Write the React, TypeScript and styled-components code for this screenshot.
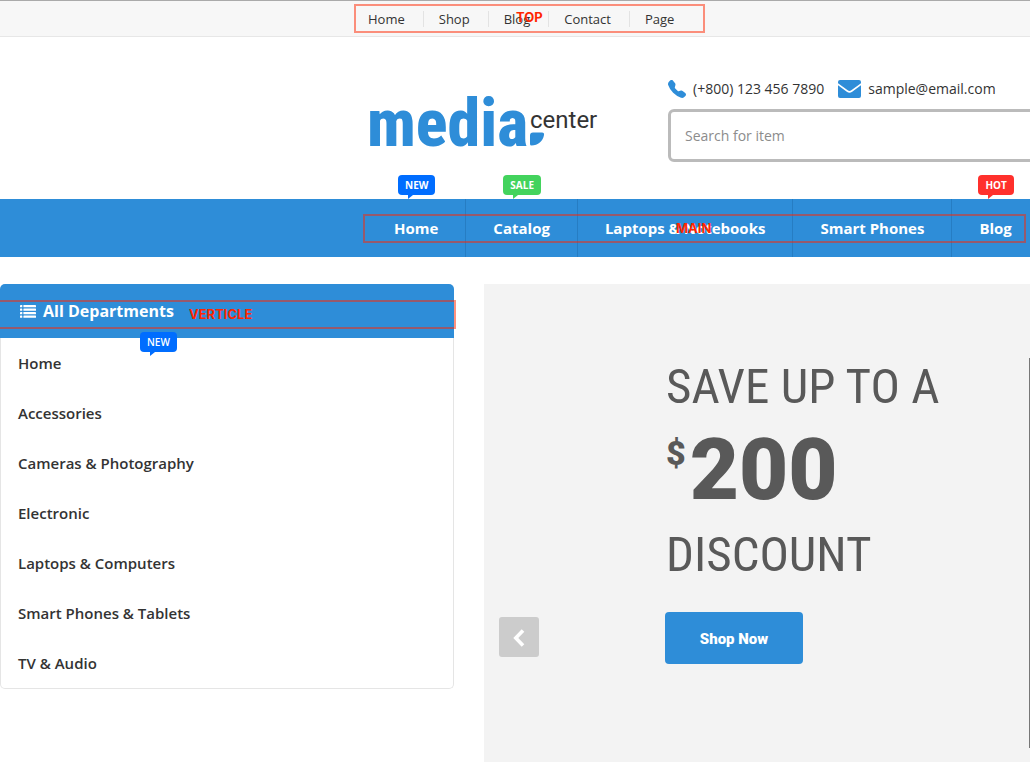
import React from 'react';
import styled, { createGlobalStyle, css } from 'styled-components';
import { BsTelephoneFill } from 'react-icons/bs';

const blue = '#2e8dd8';
const narrow = "'Liberation Sans Narrow', 'Roboto Condensed', Roboto, sans-serif";

const GlobalStyle = createGlobalStyle`
  *, *::before, *::after { box-sizing: border-box; }
  body {
    margin: 0;
    background: #fff;
    color: #333;
    font-family: 'Open Sans', 'Noto Sans', sans-serif;
    overflow-x: hidden;
  }
  a { color: inherit; text-decoration: none; }
  ul { list-style: none; margin: 0; padding: 0; }
`;

const Page = styled.div`
  display: flex;
  flex-direction: column;
  min-height: 100vh;
  overflow: hidden;
`;

const TopBar = styled.nav`
  position: relative;
  height: 37px;
  padding-left: 353px;
  background: #f7f7f7;
  border-top: 1px solid #aaa;
  border-bottom: 1px solid #e7e7e7;
`;

const TopList = styled.ul`
  display: flex;
  align-items: center;
  height: 100%;
`;

const TopItem = styled.li`
  padding: 0 18px 0 15px;
  font-size: 13px;
  line-height: 16px;
  & + & { border-left: 1px solid #e3e3e3; }
`;

const Outline = styled.div<{ $left: number; $top: number; $width: number }>`
  position: absolute;
  left: ${p => p.$left}px;
  top: ${p => p.$top}px;
  width: ${p => p.$width}px;
  height: 29px;
  border: 2px solid rgba(255, 38, 0, 0.5);
  pointer-events: none;
`;

const Note = styled.span<{ $left: number; $top: number }>`
  position: absolute;
  left: ${p => p.$left}px;
  top: ${p => p.$top}px;
  color: #ff2600;
  font: 700 13px/16px Inter, sans-serif;
  pointer-events: none;
`;

const Header = styled.header`
  display: flex;
  align-items: flex-start;
  height: 162px;
  padding-left: 367px;
`;

const Logo = styled.a`
  position: relative;
  flex: none;
  display: flex;
  align-items: flex-start;
  width: 301px;
  padding-top: 53px;
  color: ${blue};
`;

const LogoMain = styled.span`
  font: 800 66px/68px ${narrow};
`;

const LogoSub = styled.span`
  position: absolute;
  left: 163px;
  top: 69px;
  color: #333;
  font: 400 24px/28px Roboto, sans-serif;
`;

const LogoDrop = styled.svg`
  position: absolute;
  left: 163px;
  top: 95px;
`;

const HeaderTools = styled.div`
  flex: 1;
  padding-top: 39px;
`;

const Contacts = styled.div`
  display: flex;
  align-items: center;
  gap: 14px;
  height: 25px;
  font-size: 14px;
`;

const Contact = styled.a`
  display: flex;
  align-items: center;
  gap: 7px;
  svg { flex: none; color: ${blue}; }
`;

const Search = styled.input`
  display: block;
  width: calc(100% + 40px);
  height: 53px;
  margin-top: 8px;
  padding: 0 14px;
  border: 3px solid #bbb;
  border-radius: 6px;
  outline: 0;
  background: #fff;
  font: 400 14px/20px 'Open Sans', sans-serif;
  &::placeholder { color: #8c8c8c; opacity: 1; }
`;

const MainNav = styled.nav`
  position: relative;
  height: 58px;
  padding-left: 367px;
  background: ${blue};
`;

const MainList = styled.ul`
  display: flex;
  height: 100%;
`;

const MainItem = styled.li`
  position: relative;
  flex: none;
  & + & { border-left: 1px solid #267dc3; }
  > a {
    display: block;
    padding: 0 27px;
    color: #fff;
    font-size: 15px;
    font-weight: 700;
    line-height: 58px;
  }
`;

const Badge = styled.span<{ $color: string; $left: number; $top: number; $light?: boolean }>`
  position: absolute;
  left: ${p => p.$left}px;
  top: ${p => p.$top}px;
  padding: 0 7px;
  border-radius: 4px;
  background: ${p => p.$color};
  color: #fff;
  font-size: 10px;
  font-weight: 700;
  line-height: 20px;
  &::after {
    content: '';
    position: absolute;
    left: 10px;
    top: 20px;
    border-top: 4px solid ${p => p.$color};
    border-right: 5px solid transparent;
  }
  ${p => p.$light && css`font-weight: 600;`}
`;

const Content = styled.main`
  flex: 1;
  display: grid;
  grid-template-columns: 454px 1fr;
  gap: 30px;
  padding-top: 27px;
`;

const Departments = styled.aside`
  position: relative;
  align-self: start;
`;

const DeptTitle = styled.h2`
  display: flex;
  align-items: center;
  gap: 7px;
  height: 54px;
  margin: 0;
  padding-left: 20px;
  border-radius: 5px 5px 0 0;
  background: ${blue};
  color: #fff;
  font-size: 16px;
  font-weight: 700;
`;

const DeptList = styled.ul`
  border: 1px solid #e5e5e5;
  border-top: 0;
  border-radius: 0 0 5px 5px;
`;

const DeptItem = styled.li`
  position: relative;
  padding-left: 17px;
  font-size: 15px;
  font-weight: 600;
  line-height: 50px;
`;

const Banner = styled.section`
  position: relative;
  min-height: 478px;
  padding: 76px 0 90px 182px;
  background: #f3f3f3;
  color: #595959;
`;

const BannerLine = styled.p`
  margin: 0;
  font: 400 49px/54px ${narrow};
  white-space: nowrap;
`;

const Price = styled.p`
  display: flex;
  align-items: flex-start;
  gap: 4px;
  height: 114px;
  margin: 0;
  padding-top: 15px;
  font: 900 85px/82px Roboto, sans-serif;
  sup { font-size: 34px; line-height: 48px; }
`;

const ShopButton = styled.button`
  display: block;
  min-width: 138px;
  height: 52px;
  margin-top: 30px;
  margin-left: -1px;
  padding: 2px 34px 0;
  border: 0;
  border-radius: 4px;
  background: ${blue};
  color: #fff;
  font: 900 15px/20px Roboto, sans-serif;
`;

const Previous = styled.button`
  position: absolute;
  left: 15px;
  top: 333px;
  display: grid;
  place-items: center;
  width: 40px;
  height: 40px;
  padding: 2px 0 0;
  border: 0;
  border-radius: 3px;
  background: #ccc;
`;

const SlideEdge = styled.span`
  position: absolute;
  right: 0;
  top: 74px;
  width: 1px;
  height: 390px;
  background: #777;
`;

const MailIcon = () => (
  <svg width="23" height="18" viewBox="0 0 23 18" fill="currentColor" aria-hidden="true">
    <path d="M2 0h19a2 2 0 0 1 2 2v1.2l-9.7 7.1c-1.2.9-2.4.9-3.6 0L0 3.200V2a2 2 0 0 1 2-2z" />
    <path d="M0 5.200l8.800 6.500c1.800 1.300 3.600 1.300 5.400 0L23 5.200V16a2 2 0 0 1-2 2H2a2 2 0 0 1-2-2z" />
  </svg>
);

const ListIcon = () => (
  <svg width="16" height="13" viewBox="0 0 16 13" fill="currentColor" aria-hidden="true">
    {[0, 3.5, 7, 10.5].map(y => (
      <React.Fragment key={y}>
        <rect x="0" y={y} width="2.300" height="2.300" rx=".4" />
        <rect x="3.400" y={y} width="12.600" height="2.300" rx=".4" />
      </React.Fragment>
    ))}
  </svg>
);

const topLinks = ['Home', 'Shop', 'Blog', 'Contact', 'Page'];

const mainLinks = [
  { label: 'Home', badge: 'NEW', color: '#006dff', left: 31 },
  { label: 'Catalog', badge: 'SALE', color: '#43d35d', left: 37 },
  { label: 'Laptops & Notebooks' },
  { label: 'Smart Phones' },
  { label: 'Blog', badge: 'HOT', color: '#ff302c', left: 26 },
];

const departments = [
  'Home',
  'Accessories',
  'Cameras & Photography',
  'Electronic',
  'Laptops & Computers',
  'Smart Phones & Tablets',
  'TV & Audio',
];

export default function App() {
  return (
    <Page>
      <GlobalStyle />
      <TopBar aria-label="Top">
        <TopList>
          {topLinks.map(label => (
            <TopItem key={label}><a href="#">{label}</a></TopItem>
          ))}
        </TopList>
        <Outline $left={354} $top={3} $width={351} />
        <Note $left={516} $top={8}>TOP</Note>
      </TopBar>

      <Header>
        <Logo href="#">
          <LogoMain>media</LogoMain>
          <LogoSub>center</LogoSub>
          <LogoDrop width="15" height="14" viewBox="0 0 15 14" fill={blue} aria-hidden="true">
            <path d="M3 .5H12Q14.500 .5 14 3C13 9 8 13.500 1.500 13.500Q0 13.500 0 12V3.500Q0 .5 3 .5z" />
          </LogoDrop>
        </Logo>
        <HeaderTools>
          <Contacts>
            <Contact href="#"><BsTelephoneFill size={18} />(+800) 123 456 7890</Contact>
            <Contact href="#"><MailIcon />sample@email.com</Contact>
          </Contacts>
          <Search type="text" placeholder="Search for item" aria-label="Search for item" />
        </HeaderTools>
      </Header>

      <MainNav aria-label="Main">
        <MainList>
          {mainLinks.map(item => (
            <MainItem key={item.label}>
              <a href="#">{item.label}</a>
              {item.badge && <Badge $color={item.color!} $left={item.left!} $top={-24}>{item.badge}</Badge>}
            </MainItem>
          ))}
        </MainList>
        <Outline $left={363} $top={15} $width={663} />
        <Note $left={676} $top={21}>MAIN</Note>
      </MainNav>

      <Content>
        <Departments>
          <DeptTitle><ListIcon />All Departments</DeptTitle>
          <DeptList>
            {departments.map((label, i) => (
              <DeptItem key={label}>
                <a href="#">{label}</a>
                {i === 0 && <Badge $color="#006dff" $left={139} $top={-6} $light>NEW</Badge>}
              </DeptItem>
            ))}
          </DeptList>
          <Outline $left={-2} $top={16} $width={458} />
          <Note $left={189} $top={22}>VERTICLE</Note>
        </Departments>

        <Banner>
          <BannerLine>SAVE UP TO A</BannerLine>
          <Price><sup>$</sup>200</Price>
          <BannerLine>DISCOUNT</BannerLine>
          <ShopButton type="button">Shop Now</ShopButton>
          <Previous type="button" aria-label="Previous slide">
            <svg width="12" height="18" viewBox="0 0 12 18" fill="none" stroke="#fff" strokeWidth="3.600" aria-hidden="true">
              <path d="M10 1.500L2.800 9l7.200 7.500" />
            </svg>
          </Previous>
          <SlideEdge />
        </Banner>
      </Content>
    </Page>
  );
}
